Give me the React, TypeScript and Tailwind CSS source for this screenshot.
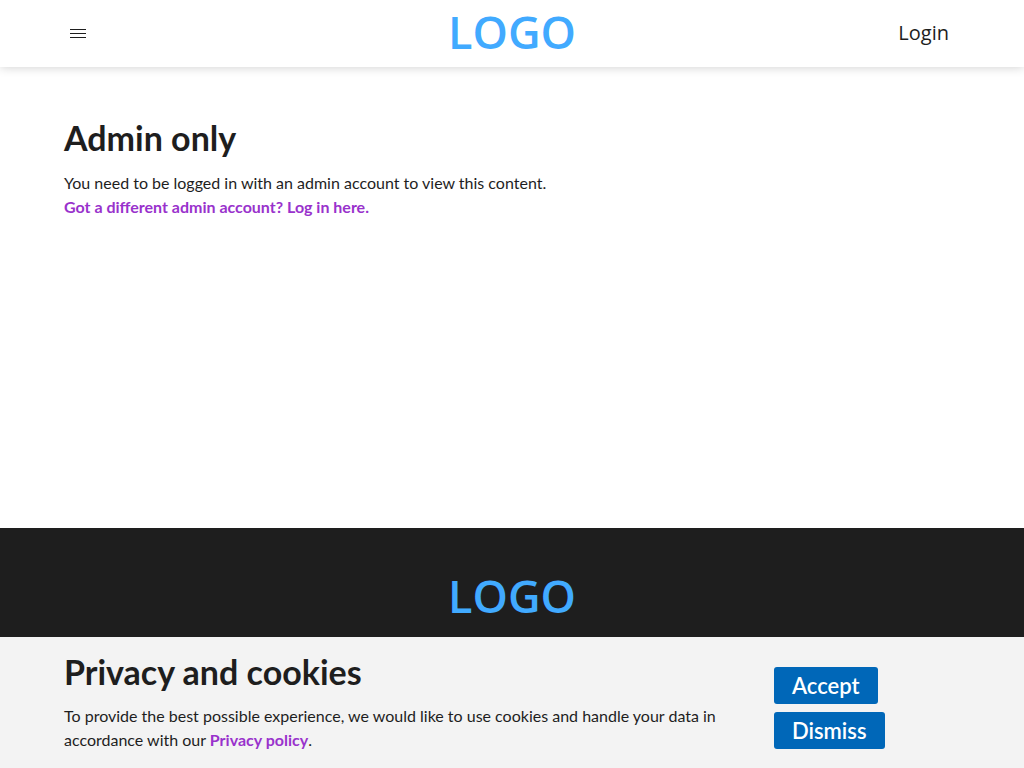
function Logo() {
  return (
    <a
      href="/"
      className="font-['Open_Sans','Noto_Sans',sans-serif] text-[45px] leading-[46px] font-semibold text-[#41aaff]"
    >
      LOGO
    </a>
  );
}

function Header() {
  return (
    <header className="grid h-[67px] grid-cols-3 items-center bg-white px-16 shadow-[0_0_10px_rgba(0,0,0,0.2)]">
      <button type="button" aria-label="Menu" className="flex w-7 justify-center justify-self-start py-2">
        <svg width="16" height="9" viewBox="0 0 16 9" fill="#1e1e1e" shapeRendering="crispEdges">
          <path d="M0 0h16v1H0zM0 4h16v1H0zM0 8h16v1H0z" />
        </svg>
      </button>
      <div className="flex justify-center pb-1">
        <Logo />
      </div>
      <a
        href="/login"
        className="mr-[11px] justify-self-end pb-0.5 font-['Open_Sans','Noto_Sans',sans-serif] text-[20px] leading-6"
      >
        Login
      </a>
    </header>
  );
}

function CookieBanner() {
  return (
    <section
      aria-label="Privacy and cookies"
      className="fixed inset-x-0 bottom-0 flex items-start bg-[#f3f3f3] px-16 pt-3 pb-4"
    >
      <div className="flex-1">
        <h2 className="text-[34px] leading-[45px] font-bold">Privacy and cookies</h2>
        <p className="mt-2.5 text-[16px] leading-6">
          To provide the best possible experience, we would like to use cookies and handle your data in
          accordance with our{" "}
          <a href="/privacy" className="font-bold text-[#9932cc]">
            Privacy policy
          </a>
          .
        </p>
      </div>
      <div className="mt-[18px] ml-6 flex w-[186px] flex-col items-start gap-2">
        <button type="button" className="rounded-[3px] bg-[#0067b8] px-[18px] py-1 text-[22px] leading-[29px] font-semibold text-white">
          Accept
        </button>
        <button type="button" className="rounded-[3px] bg-[#0067b8] px-[18px] py-1 text-[22px] leading-[29px] font-semibold text-white">
          Dismiss
        </button>
      </div>
    </section>
  );
}

export default function App() {
  return (
    <div className="flex min-h-screen flex-col bg-white font-['Lato','Open_Sans',sans-serif] text-[#1e1e1e]">
      <Header />
      <main className="flex-1 px-16 pt-12">
        <h1 className="text-[34px] leading-[46px] font-bold">Admin only</h1>
        <p className="mt-2.5 text-[16px] leading-6">
          You need to be logged in with an admin account to view this content.
          <br />
          <a href="/login" className="font-bold text-[#9932cc]">
            Got a different admin account? Log in here.
          </a>
        </p>
      </main>
      <footer className="flex h-60 items-start justify-center bg-[#1e1e1e] pt-[45px]">
        <Logo />
      </footer>
      <CookieBanner />
    </div>
  );
}
